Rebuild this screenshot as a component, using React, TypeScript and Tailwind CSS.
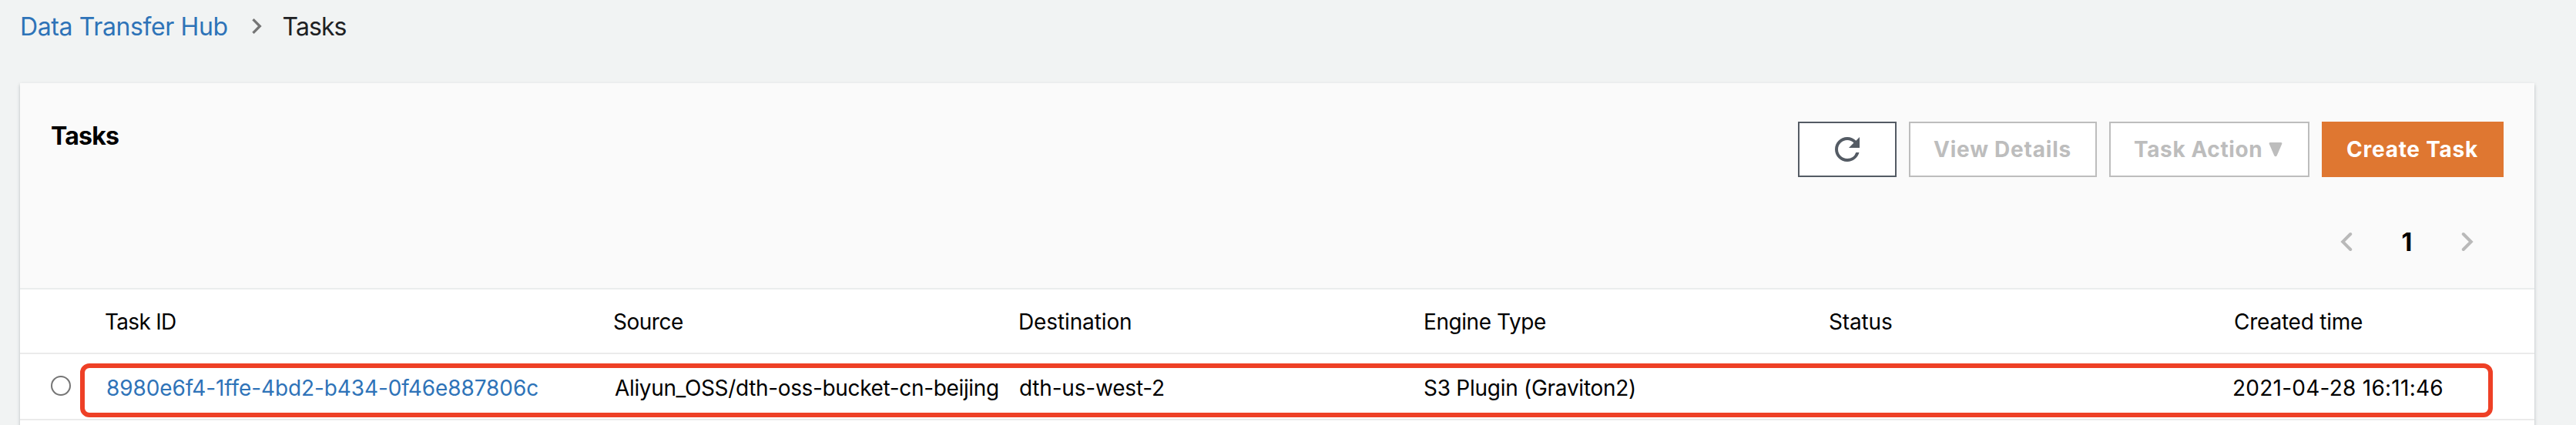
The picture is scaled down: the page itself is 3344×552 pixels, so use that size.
import type { ReactNode } from "react";
import { MdNavigateNext, MdRefresh } from "react-icons/md";

function Chevron({ flip = false }: { flip?: boolean }) {
  return (
    <svg
      viewBox="0 0 16 26"
      className={flip ? "h-[26px] w-4 rotate-180" : "h-[26px] w-4"}
      fill="none"
      stroke="#b9b9b9"
      strokeWidth="4"
      strokeLinecap="round"
      strokeLinejoin="miter"
    >
      <path d="M2.8 3L12.8 13L2.8 23" />
    </svg>
  );
}

function DisabledButton({ className, children }: { className: string; children: ReactNode }) {
  return (
    <button
      disabled
      className={`flex h-[72px] items-center border-2 border-[#bdbdbd] bg-white text-[28px] font-bold whitespace-nowrap text-[#bdbdbd] ${className}`}
    >
      {children}
    </button>
  );
}

const columns = "grid grid-cols-[110px_660px_526px_526px_526px_526px_390px] items-center";

export default function App() {
  return (
    <div className="h-[552px] w-[3344px] overflow-hidden bg-[#f1f3f3] pl-[26px] font-['Inter','Liberation_Sans',sans-serif] text-black">
      <nav className="flex h-[108px] items-start pt-[14px] text-[32px] leading-10">
        <a className="w-[287px] pt-px tracking-[-0.38px] whitespace-nowrap text-[#2e73b8]">Data Transfer Hub</a>
        <MdNavigateNext className="size-10 text-[#757575]" />
        <span className="ml-[13.5px] pt-px tracking-[-0.93px] text-[#202124]">Tasks</span>
      </nav>

      <main className="flex h-[500px] w-[3264px] flex-col bg-white shadow-[0_2px_4px_rgba(0,28,36,0.25)]">
        <header className="h-[266px] bg-[#fafafa] pt-[50px] pr-10 pl-10">
          <div className="flex items-start justify-between">
            <h1 className="text-[32px] leading-[38px] font-bold tracking-[-0.77px]">Tasks</h1>
            <div className="flex gap-4">
              <button className="flex h-[72px] w-32 items-center justify-center border-2 border-[#545b64] bg-white">
                <MdRefresh className="size-12 text-[#545b64]" />
              </button>
              <DisabledButton className="w-[244px] pl-[30px] tracking-[0.78px]">View Details</DisabledButton>
              <DisabledButton className="w-[260px] pl-[30px] tracking-[0.6px]">
                Task Action
                <svg viewBox="0 0 18 20" className="ml-[8px] h-5 w-[18px]" fill="currentColor">
                  <path d="M2.2 1H15.8Q18 1 17.1 3.2L11 17.4Q9 21.2 7 17.4L.9 3.2Q0 1 2.2 1Z" />
                </svg>
              </DisabledButton>
              <button className="flex h-[72px] w-[236px] items-center bg-[#df7731] pl-8 text-[28px] font-bold tracking-[0.75px] whitespace-nowrap text-white">
                Create Task
              </button>
            </div>
          </div>
          <div className="mt-[64px] mr-[39px] flex h-10 items-center justify-end">
            <Chevron flip />
            <span className="w-[141px] pt-px text-center text-[32px] leading-10 font-bold">1</span>
            <Chevron />
          </div>
        </header>

        <div className={`${columns} h-[86px] border-y-2 border-t-[#eaeded] border-b-[#ebebeb] pt-[2px] text-[28px] leading-[34px] whitespace-nowrap`}>
          <span />
          <span className="tracking-[-0.71px]">Task ID</span>
          <span className="tracking-[-0.48px]">Source</span>
          <span className="tracking-[-0.12px]">Destination</span>
          <span className="tracking-[-0.43px]">Engine Type</span>
          <span className="tracking-[-0.14px]">Status</span>
          <span className="tracking-[-0.23px]">Created time</span>
        </div>

        <div className={`${columns} relative h-[86px] border-b-2 border-b-[#ebebeb] text-[28px] leading-[34px] whitespace-nowrap`}>
          <span className="mb-[2px] ml-10 size-[26px] rounded-full border-2 border-[#757575] bg-white" />
          <a className="ml-[2px] pt-[3px] tracking-[-0.1px] text-[#2e73b8]">8980e6f4-1ffe-4bd2-b434-0f46e887806c</a>
          <span className="ml-[2px] pt-[3px] tracking-[-0.35px]">Aliyun_OSS/dth-oss-bucket-cn-beijing</span>
          <span className="ml-px pt-[3px] tracking-[-0.2px]">dth-us-west-2</span>
          <span className="pt-[3px] tracking-[-0.27px]">S3 Plugin (Graviton2)</span>
          <span />
          <span className="-ml-[2px] pt-[3px] tracking-[0.25px]">2021-04-28 16:11:46</span>
          <div className="absolute top-[12px] left-[78px] h-[70px] w-[3132px] rounded-[12px] border-[6px] border-[#ee4026]" />
        </div>
      </main>
    </div>
  );
}
